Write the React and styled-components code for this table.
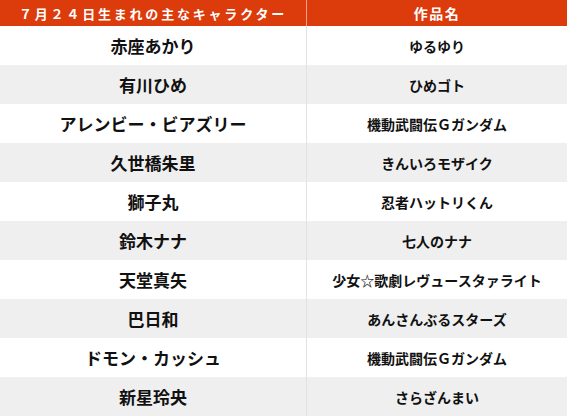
import React from 'react';
import styled, { createGlobalStyle } from 'styled-components';

const GlobalStyle = createGlobalStyle`
  html, body {
    margin: 0;
    padding: 0;
    background: #fff;
  }
  body {
    font-family: "Noto Sans CJK JP", "Noto Sans", sans-serif;
  }
`;

const Table = styled.div`
  width: 567px;
  display: grid;
  grid-template-columns: 307px 1fr;
`;

const HeadCell = styled.div`
  height: 26px;
  background: #dc3b0b;
  color: #fff;
  font-weight: 700;
  font-size: ${p => (p.$wide ? '13px' : '14px')};
  display: flex;
  align-items: center;
  justify-content: center;
  letter-spacing: ${p => (p.$wide ? '2.8px' : '1.5px')};
  border-right: ${p => (p.$divider ? '1px solid #f3a68c' : 'none')};
`;

const Cell = styled.div`
  height: 39px;
  display: flex;
  align-items: center;
  justify-content: center;
  font-weight: 700;
  color: #111;
  font-size: ${p => (p.$big ? '17px' : '14px')};
  background: ${p => (p.$alt ? '#efefef' : '#fff')};
  border-right: ${p => (p.$divider ? '1px solid #e2e2e2' : 'none')};
  white-space: nowrap;
`;

const rows = [
  ['赤座あかり', 'ゆるゆり'],
  ['有川ひめ', 'ひめゴト'],
  ['アレンビー・ビアズリー', '機動武闘伝Ｇガンダム'],
  ['久世橋朱里', 'きんいろモザイク'],
  ['獅子丸', '忍者ハットリくん'],
  ['鈴木ナナ', '七人のナナ'],
  ['天堂真矢', '少女☆歌劇レヴュースタァライト'],
  ['巴日和', 'あんさんぶるスターズ'],
  ['ドモン・カッシュ', '機動武闘伝Ｇガンダム'],
  ['新星玲央', 'さらざんまい'],
];

export default function App() {
  return (
    <>
      <GlobalStyle />
      <Table>
        <HeadCell $wide $divider>７月２４日生まれの主なキャラクター</HeadCell>
        <HeadCell>作品名</HeadCell>
        {rows.map(([name, work], i) => (
          <React.Fragment key={i}>
            <Cell $big $divider $alt={i % 2 === 1}>{name}</Cell>
            <Cell $alt={i % 2 === 1}>{work}</Cell>
          </React.Fragment>
        ))}
      </Table>
    </>
  );
}
